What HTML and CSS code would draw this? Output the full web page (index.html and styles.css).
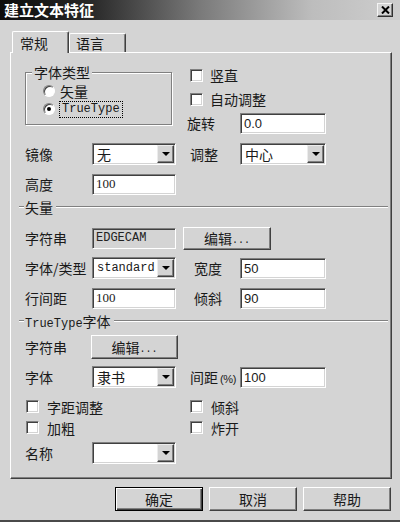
FILE: index.html
```html
<!DOCTYPE html>
<html lang="zh-CN">
<head>
<meta charset="utf-8">
<title>建立文本特征</title>
<link rel="stylesheet" href="styles.css">
</head>
<body>
<div class="dialog">
  <div class="titlebar">
    <span class="title">建立文本特征</span>
    <span class="close"><svg width="9" height="8" viewBox="0 0 9 8"><path d="M1 0.5L8 7.5M8 0.5L1 7.5" stroke="#000" stroke-width="2"/></svg></span>
  </div>
  <div class="tabs">
    <div class="tab active">常规</div>
    <div class="tab">语言</div>
  </div>
  <div class="panel">
    <div class="top">
      <fieldset class="group">
        <legend>字体类型</legend>
        <div class="opt"><span class="radio"></span><span>矢量</span></div>
        <div class="opt"><span class="radio on"></span><span class="mono focus">TrueType</span></div>
      </fieldset>
      <div class="topright">
        <div class="opt trow"><span class="check"></span><span>竖直</span></div>
        <div class="opt trow"><span class="check"></span><span>自动调整</span></div>
        <div class="opt trow"><span class="lbl2">旋转</span><span class="input field2 sans">0.0</span></div>
      </div>
    </div>

    <div class="row"><span class="lbl">镜像</span><span class="combo field"><span class="val">无</span><span class="drop"></span></span><span class="lbl2">调整</span><span class="combo field2"><span class="val">中心</span><span class="drop"></span></span></div>
    <div class="row"><span class="lbl">高度</span><span class="input field serif">100</span></div>

    <div class="sep sep-a"><span class="sep-lbl">矢量</span></div>

    <div class="row"><span class="lbl">字符串</span><span class="input field mono disabled">EDGECAM</span><span class="btn btn-edit">编辑<span class="dots">...</span></span></div>
    <div class="row"><span class="lbl">字体/类型</span><span class="combo field"><span class="val mono">standard</span><span class="drop"></span></span><span class="lbl2 ind">宽度</span><span class="input field2 sans">50</span></div>
    <div class="row"><span class="lbl">行间距</span><span class="input field serif">100</span><span class="lbl2 ind">倾斜</span><span class="input field2 sans">90</span></div>

    <div class="sep sep-b"><span class="sep-lbl"><span class="mono">TrueType</span>字体</span></div>

    <div class="row"><span class="lbl">字符串</span><span class="btn btn-wide">编辑<span class="dots">...</span></span></div>
    <div class="row"><span class="lbl">字体</span><span class="combo field"><span class="val">隶书</span><span class="drop"></span></span><span class="lbl2">间距<span class="pct">(%)</span></span><span class="input field2 sans">100</span></div>

    <div class="crow first"><div class="opt ccol"><span class="check"></span><span>字距调整</span></div><div class="opt"><span class="check"></span><span>倾斜</span></div></div>
    <div class="crow"><div class="opt ccol"><span class="check"></span><span>加粗</span></div><div class="opt"><span class="check"></span><span>炸开</span></div></div>

    <div class="row"><span class="lbl">名称</span><span class="combo field"><span class="val"></span><span class="drop"></span></span></div>
  </div>
  <div class="buttons">
    <span class="btn dlg default">确定</span>
    <span class="btn dlg">取消</span>
    <span class="btn dlg">帮助</span>
  </div>
</div>
</body>
</html>
```

FILE: styles.css
```css
* { box-sizing: border-box; }

body {
  margin: 0;
  background: #d4d4d4;
  font-family: "Noto Sans CJK SC", "Noto Sans", sans-serif;
  font-size: 14px;
  color: #1a1a1a;
}

.dialog {
  width: 400px;
  height: 522px;
  background: #d4d4d4;
  border-bottom: 2px solid #4a4a4a;
  display: flex;
  flex-direction: column;
}

.titlebar {
  height: 20px;
  flex: none;
  background: linear-gradient(90deg, #0c0c0c 0%, #262626 22%, #7a7a7a 50%, #bdbdbd 78%, #cecece 100%);
  display: flex;
  align-items: center;
  justify-content: space-between;
  padding: 0 7px 0 4px;
}

.title {
  color: #fff;
  font-weight: bold;
  font-size: 15px;
  line-height: 20px;
}

.close {
  width: 16px;
  height: 14px;
  background: #d4d4d4;
  border: 1px solid;
  border-color: #f4f4f4 #303030 #303030 #f4f4f4;
  box-shadow: inset -1px -1px 0 #808080;
  display: flex;
  align-items: center;
  justify-content: center;
}

.tabs {
  display: flex;
  align-items: flex-end;
  height: 21px;
  margin-top: 11px;
  padding-left: 12px;
  flex: none;
}

.tab {
  width: 57px;
  height: 19px;
  border-top: 1px solid #fff;
  border-left: 1px solid #fff;
  border-right: 1px solid #404040;
  box-shadow: inset -1px 0 0 #808080;
  border-radius: 2px 2px 0 0;
  padding-left: 6px;
  display: flex;
  align-items: center;
  line-height: 1;
}

.tab.active {
  width: 57px;
  height: 22px;
  margin-bottom: -1px;
  padding-left: 7px;
  background: #d4d4d4;
  position: relative;
  z-index: 1;
}

.panel {
  margin-left: 10px;
  width: 382px;
  height: 427px;
  flex: none;
  border: 1px solid;
  border-color: #fff #404040 #404040 #fff;
  box-shadow: inset -1px -1px 0 #808080;
  padding: 10px 0 0 14px;
}

.top {
  display: flex;
  height: 76px;
}

.group {
  margin: 0;
  width: 147px;
  height: 62px;
  padding: 1px 0 0 17px;
  border: 1px solid #808080;
  box-shadow: inset 1px 1px 0 #fff, 1px 1px 0 #fff;
}

.group legend {
  margin-left: -11px;
  padding: 0 2px;
  line-height: 18px;
  background: #d4d4d4;
}

.opt {
  display: flex;
  align-items: center;
  height: 18px;
}

.radio {
  width: 12px;
  height: 12px;
  border-radius: 50%;
  background: #fff;
  border: 1px solid;
  border-color: #808080 #fff #fff #808080;
  box-shadow: inset 1px 1px 0 #404040;
  margin-right: 5px;
  display: flex;
  align-items: center;
  justify-content: center;
  flex: none;
}

.radio.on::after {
  content: "";
  width: 4px;
  height: 4px;
  border-radius: 50%;
  background: #000;
}

.focus {
  outline: 1px dotted #000;
  padding: 0 2px;
  line-height: 15px;
}

.mono {
  font-family: "Liberation Mono", monospace;
  font-size: 12px;
}

.serif {
  font-family: "Liberation Serif", serif;
  font-size: 13px;
}

.sans {
  font-family: "Liberation Sans", sans-serif;
  font-size: 13px;
}

.topright {
  margin-left: 15px;
}

.trow {
  height: 24px;
}

.check {
  width: 13px;
  height: 13px;
  flex: none;
  background: #fff;
  border: 1px solid;
  border-color: #808080 #fff #fff #808080;
  box-shadow: inset 1px 1px 0 #404040, inset -1px -1px 0 #d4d4d4;
  margin-left: 3px;
  margin-right: 7px;
}

.row {
  display: flex;
  align-items: center;
  height: 30px;
}

.lbl {
  width: 67px;
  flex: none;
}

.lbl2 {
  width: 53px;
  flex: none;
  white-space: nowrap;
}

.row .lbl2 {
  width: 50px;
  margin-left: 14px;
}

.row .lbl2.ind {
  padding-left: 4px;
}

.pct {
  font-family: "Liberation Sans", sans-serif;
  font-size: 11px;
  letter-spacing: -0.3px;
  padding-left: 2px;
}

.field { width: 84px; flex: none; }
.field2 { width: 86px; flex: none; }

.input {
  height: 21px;
  background: #fff;
  border: 1px solid;
  border-color: #808080 #fff #fff #808080;
  box-shadow: inset 1px 1px 0 #404040, inset -1px -1px 0 #d4d4d4;
  padding: 0 3px;
  display: flex;
  align-items: center;
}

.input.disabled {
  background: #d4d4d4;
  color: #222;
}

.combo {
  height: 22px;
  background: #fff;
  border: 1px solid;
  border-color: #808080 #fff #fff #808080;
  box-shadow: inset 1px 1px 0 #404040, inset -1px -1px 0 #d4d4d4;
  padding: 1px 1px 1px 4px;
  display: flex;
  align-items: center;
}

.combo .val {
  flex: 1;
}

.drop {
  width: 17px;
  height: 18px;
  flex: none;
  background: #d4d4d4;
  border: 1px solid;
  border-color: #ececec #404040 #404040 #ececec;
  box-shadow: inset -1px -1px 0 #808080;
  display: flex;
  align-items: center;
  justify-content: center;
}

.drop::after {
  content: "";
  border-left: 4px solid transparent;
  border-right: 4px solid transparent;
  border-top: 4px solid #000;
}

.btn {
  height: 23px;
  background: #d4d4d4;
  border: 1px solid;
  border-color: #fff #404040 #404040 #fff;
  box-shadow: inset -1px -1px 0 #808080;
  display: flex;
  align-items: center;
  justify-content: center;
  flex: none;
}

.dots {
  font-family: "Liberation Mono", monospace;
  font-size: 10px;
  padding-top: 4px;
}

.btn-edit {
  width: 88px;
  margin-left: 7px;
}

.btn-wide {
  width: 87px;
  height: 24px;
  margin-left: -1px;
}

.sep {
  display: flex;
  align-items: center;
  height: 16px;
  margin-left: -6px;
  margin-right: 3px;
}

.sep::before,
.sep::after {
  content: "";
  border-top: 1px solid #808080;
  border-bottom: 1px solid #fff;
}

.sep::before {
  width: 5px;
  margin-right: 1px;
}

.sep::after {
  flex: 1;
  margin-left: 3px;
}

.sep-a { margin-bottom: 8px; }
.sep-b { margin-bottom: 3px; }

.crow {
  display: flex;
  align-items: center;
  height: 21px;
}

.crow.first { margin-top: 4px; }

.crow .check {
  margin-left: 1px;
  margin-right: 8px;
}

.ccol {
  width: 164px;
  flex: none;
}

.buttons {
  display: flex;
  justify-content: flex-end;
  gap: 6px;
  padding-right: 9px;
  margin-top: 8px;
}

.btn.dlg {
  width: 88px;
  height: 24px;
}

.btn.default {
  border: 1px solid #000;
  box-shadow: inset 1px 1px 0 #fff, inset -1px -1px 0 #404040, inset -2px -2px 0 #808080;
}
```
